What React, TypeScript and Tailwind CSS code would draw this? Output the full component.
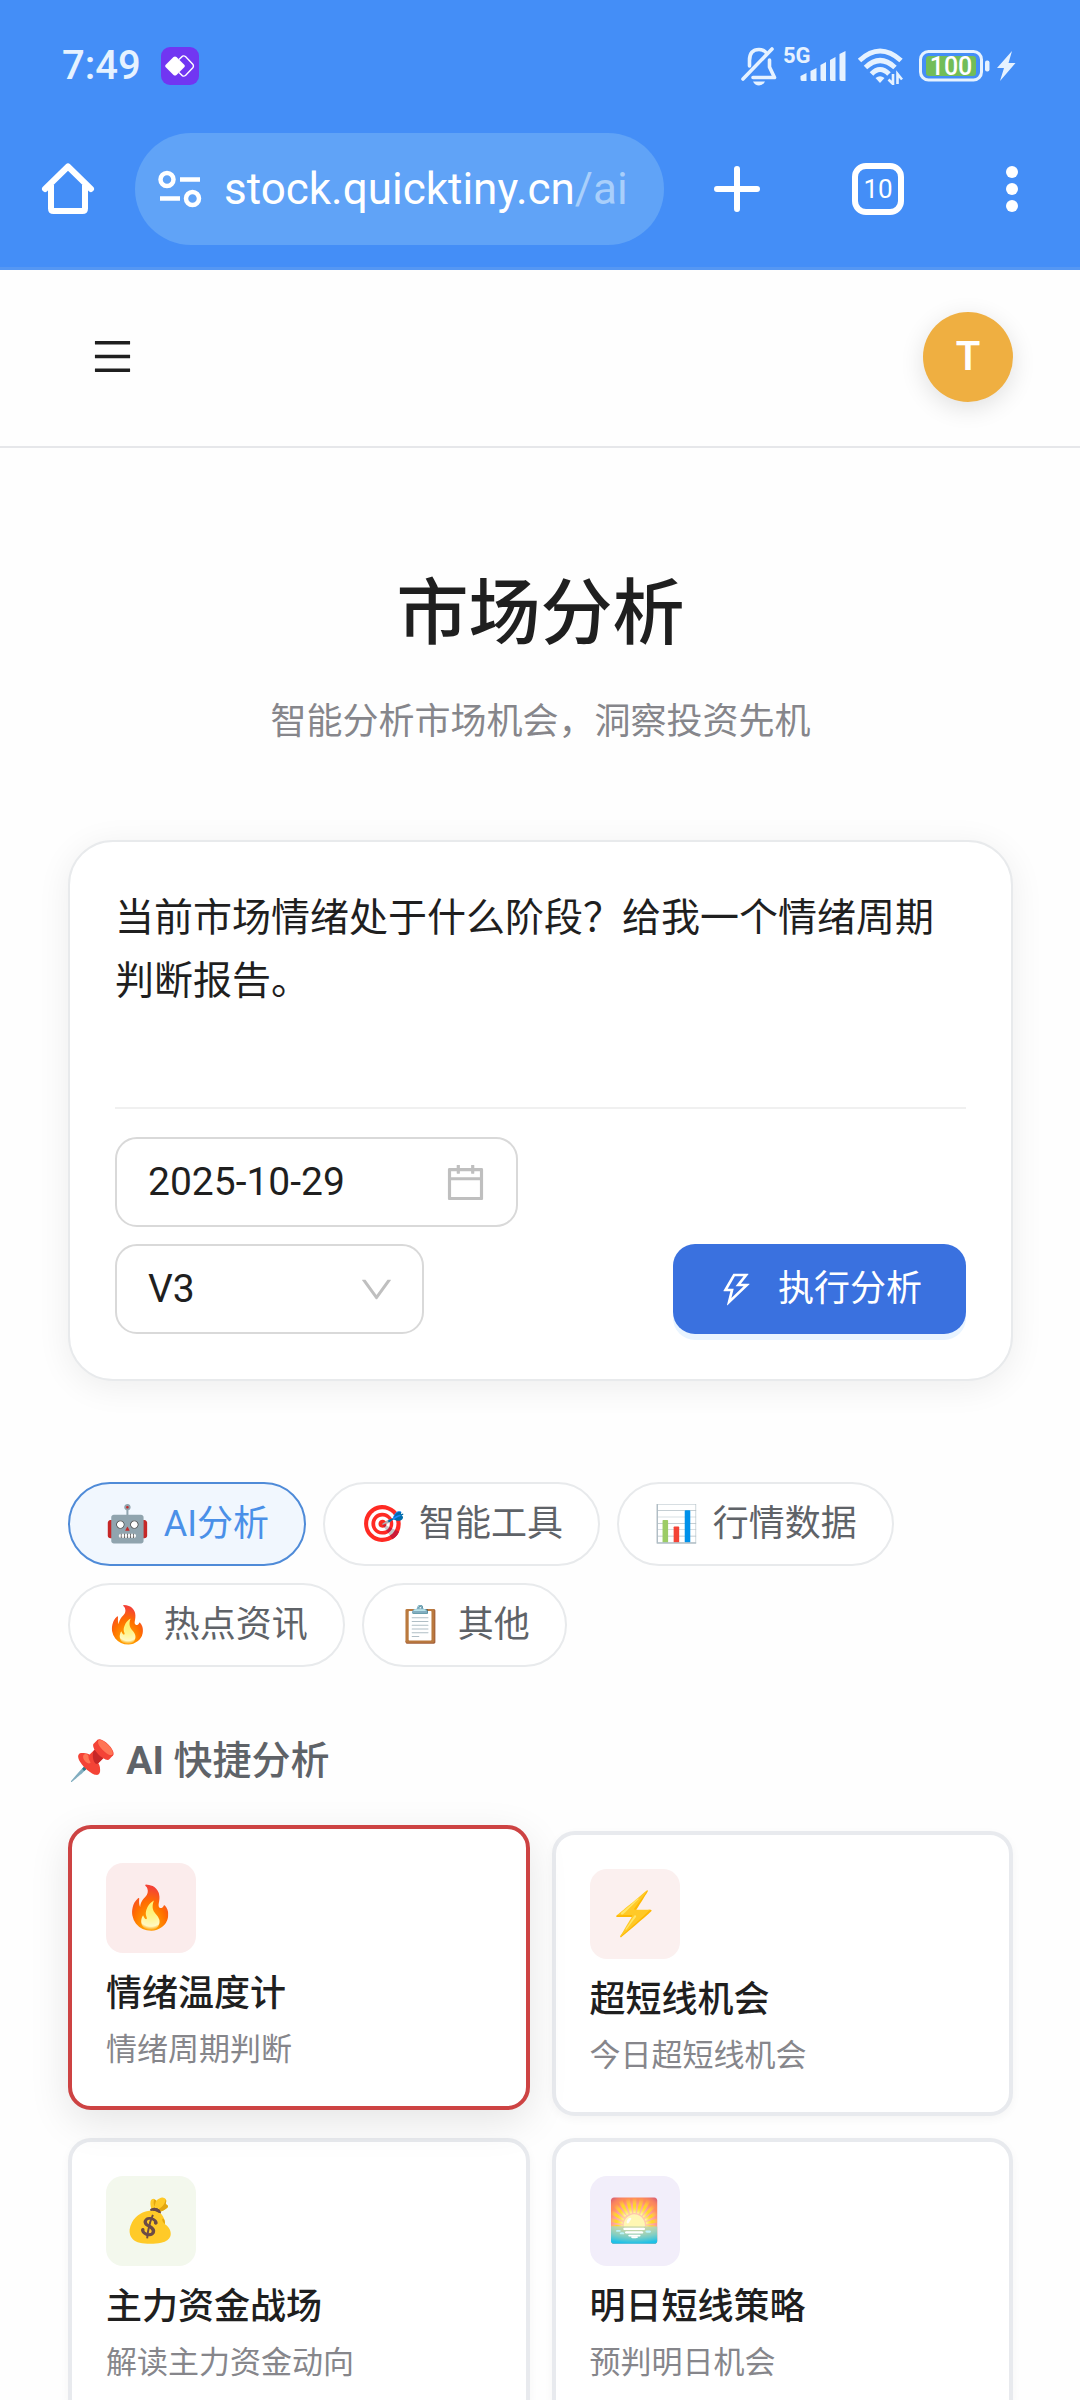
import React, { useState } from "react";
import {
  AiOutlineCalendar,
  AiOutlineDown,
  AiOutlineMenu,
  AiOutlineThunderbolt,
} from "react-icons/ai";

const tabs = [
  { key: "ai", icon: "🤖", label: "AI分析" },
  { key: "tools", icon: "🎯", label: "智能工具" },
  { key: "market", icon: "📊", label: "行情数据" },
  { key: "news", icon: "🔥", label: "热点资讯" },
  { key: "other", icon: "📋", label: "其他" },
];

const actions = [
  { icon: "🔥", title: "情绪温度计", desc: "情绪周期判断", tint: "bg-[#fbecec]" },
  { icon: "⚡", title: "超短线机会", desc: "今日超短线机会", tint: "bg-[#fbf0ef]" },
  { icon: "💰", title: "主力资金战场", desc: "解读主力资金动向", tint: "bg-[#f3f8ed]" },
  { icon: "🌅", title: "明日短线策略", desc: "预判明日机会", tint: "bg-[#f2eefa]" },
];

const StatusBar: React.FC = () => (
  <div className="flex items-center justify-between pt-[44px] pl-[62px] pr-[64px] h-[88px] text-[#e6f2ff]">
    <div className="flex items-center gap-[20px]">
      <span className="text-[40px] leading-[42px] font-medium">7:49</span>
      <svg width="38" height="38" viewBox="0 0 38 38">
        <rect width="38" height="38" rx="9" fill="#7136f2" />
        <path
          d="M18 12.5 21.5 9.2Q23 8.500 24.500 9.500L32 17.500Q33 19 32 20.500L24.500 28.500Q23 29.500 21.500 28.800L18 25.500"
          fill="none"
          stroke="#fff"
          strokeWidth="1.400"
        />
        <path
          d="M4.500 18 12.500 10Q14 9 15.500 10L23.500 18Q24.300 19 23.500 20L15.500 28Q14 29 12.500 28L4.500 20Q3.700 19 4.500 18Z"
          fill="#fff"
        />
      </svg>
    </div>

    <div className="flex items-center">
      {/* 静音 */}
      <svg width="36" height="40" viewBox="0 0 36 40" fill="none" stroke="currentColor">
        <path
          d="M8.500 20V14.500Q8.500 3.500 18 3.500Q22 3.500 24.500 6M28.500 14V21L33.500 31.500H12"
          strokeWidth="3.600"
          strokeLinejoin="round"
          strokeLinecap="round"
        />
        <path d="M2 33 31 3" strokeWidth="3.600" strokeLinecap="round" />
        <path d="M12 35.500H24Q22 39.500 18 39.500Q14 39.500 12 35.500Z" fill="currentColor" stroke="none" />
      </svg>
      {/* 信号 */}
      <svg className="ml-[7px]" width="64" height="54" viewBox="0 -8 64 54" fill="currentColor">
        <text x="-1" y="16" fontSize="22" fontWeight="700" fontFamily="Roboto, sans-serif">
          5G
        </text>
        <path d="M16.500 29 22.500 26V34H18Q16.500 34 16.500 32Z" />
        <path d="M26.500 24 32.500 21V34H28Q26.500 34 26.500 32Z" />
        <path d="M36.500 18 42 15V34H38Q36.500 34 36.500 32Z" />
        <path d="M46 13 51.500 10V34H47.500Q46 34 46 32Z" />
        <path d="M55.500 7 61.500 4V34H57.500Q55.500 34 55.500 32Z" />
      </svg>
      {/* WiFi */}
      <svg className="ml-[9px]" width="48" height="38" viewBox="0 0 48 38" fill="none" stroke="currentColor">
        <path d="M2.500 13.500Q23 -5.500 44 13.500" strokeWidth="5" />
        <path d="M8.500 20.500Q23 6.500 38 20.500" strokeWidth="5" />
        <path d="M14.500 27Q23 18 32 27" strokeWidth="5" />
        <path d="M18.500 31Q23 27.500 27.500 31L23 36Z" fill="currentColor" stroke="none" />
        <path d="M36 27V37L31.500 32.500M40.500 37V27L45 32.500" strokeWidth="2.600" />
      </svg>
      {/* 电量 */}
      <svg className="ml-[14px]" width="72" height="32" viewBox="0 0 72 32">
        <rect x="1.500" y="1.500" width="61" height="28.500" rx="8" fill="none" stroke="currentColor" strokeWidth="3" />
        <rect x="7" y="6" width="50" height="20" rx="3" fill="#72bd58" />
        <rect x="66" y="10.500" width="4.500" height="11" rx="2" fill="currentColor" />
        <text
          x="32"
          y="25"
          textAnchor="middle"
          fontSize="25"
          fontWeight="500"
          fill="#fff"
          fontFamily="Roboto, sans-serif"
        >
          100
        </text>
      </svg>
      <svg className="ml-[5px]" width="20" height="30" viewBox="0 0 20 30" fill="currentColor">
        <path d="M16 0 1 17H8L4 30 19.500 12H12.500Z" />
      </svg>
    </div>
  </div>
);

const BrowserBar: React.FC = () => (
  <div className="flex items-center mt-[45px] pl-[41px] pr-[60px] pb-[22px] text-white">
    <button aria-label="主页">
      <svg width="54" height="54" viewBox="0 0 54 54" fill="none" stroke="currentColor" strokeWidth="6">
        <path d="M4 27 27 4.500 50 27" strokeLinecap="round" strokeLinejoin="round" />
        <path d="M10 23V46.500Q10 49 12.500 49H41.500Q44 49 44 46.500V23" />
      </svg>
    </button>
    <button className="ml-[40px] flex-1 min-w-0 h-28 rounded-full bg-[#60a3f7] flex items-center pl-[23px] gap-[22px] text-left">
      <svg className="shrink-0" width="44" height="38" viewBox="0 0 44 38" fill="none" stroke="currentColor" strokeWidth="4.500">
        <circle cx="9" cy="9.500" r="6.500" />
        <path d="M22 9.500H42M2 28.500H22" />
        <circle cx="34.500" cy="28.500" r="6.500" />
      </svg>
      <span className="text-[44px] leading-[60px] whitespace-nowrap">
        stock.quicktiny.cn<span className="text-[#a9cffb]">/ai</span>
      </span>
    </button>
    <button className="ml-[50px]" aria-label="新标签页">
      <svg width="46" height="46" viewBox="0 0 46 46" stroke="currentColor" strokeWidth="6" strokeLinecap="round">
        <path d="M23 3V43M3 23H43" />
      </svg>
    </button>
    <button
      className="ml-[92px] w-[52px] h-[52px] rounded-[14px] border-[6px] border-white text-[26px] leading-none flex items-center justify-center"
      aria-label="标签页"
    >
      10
    </button>
    <button className="ml-[100px]" aria-label="更多">
      <svg width="16" height="48" viewBox="0 0 16 48" fill="currentColor">
        <circle cx="8" cy="7" r="6" />
        <circle cx="8" cy="24" r="6" />
        <circle cx="8" cy="41" r="6" />
      </svg>
    </button>
  </div>
);

export default function App() {
  const [prompt, setPrompt] = useState(
    "当前市场情绪处于什么阶段？给我一个情绪周期判断报告。",
  );
  const [activeTab, setActiveTab] = useState("ai");
  const [selected, setSelected] = useState(0);

  return (
    <div className="h-screen flex flex-col overflow-hidden bg-[#fefefe] text-[#1f1f1f] font-[Roboto,'Noto_Sans_CJK_SC','Noto_Color_Emoji',sans-serif]">
      <div className="shrink-0 bg-[#448ef7] border-b-[3px] border-[#5597f3]">
        <StatusBar />
        <BrowserBar />
      </div>

      <header className="shrink-0 h-[178px] pl-[67px] pr-[67px] pb-[3px] flex items-center justify-between bg-[#fefefe] border-b-2 border-[#e6e7ea]">
        <button className="w-[90px] h-[90px] flex items-center justify-center" aria-label="菜单">
          <AiOutlineMenu size={45} />
        </button>
        <button className="w-[90px] h-[90px] rounded-full bg-[#efaf41] text-white text-[40px] font-semibold shadow-[0_6px_24px_rgba(0,0,0,0.12)]">
          T
        </button>
      </header>

      <main className="flex-1 min-h-0 overflow-y-auto [scrollbar-width:none] pl-[68px] pr-[67px] pt-[116px] pb-12">
        <h1 className="text-center text-[72px] leading-[100px] font-medium">市场分析</h1>
        <p className="mt-[30px] text-center text-[36px] leading-[56px] text-[#86868b]">
          智能分析市场机会，洞察投资先机
        </p>

        {/* 输入区 */}
        <section className="mt-[90px] px-[45px] pt-[45px] pb-[45px] bg-white rounded-[45px] border-2 border-[#e8eaec] shadow-[0_6px_34px_rgba(0,0,0,0.07)]">
          <textarea
            aria-label="分析问题"
            className="block w-full h-[220px] resize-none bg-transparent text-[39px] leading-[63px] outline-none"
            value={prompt}
            onChange={(e) => setPrompt(e.target.value)}
          />
          <div className="border-t-2 border-[#f0f0f0] pt-7 flex flex-col gap-[17px]">
            <label className="w-[403px] h-[90px] pl-[31px] pr-7 flex items-center justify-between rounded-[22px] border-2 border-[#d9d9d9]">
              <input
                aria-label="日期"
                className="w-[260px] text-[39px] bg-transparent outline-none"
                defaultValue="2025-10-29"
              />
              <AiOutlineCalendar size={45} className="text-[#bfbfbf]" />
            </label>
            <div className="flex items-center justify-between">
              <div className="relative w-[309px]">
                <select
                  aria-label="模型"
                  className="w-full h-[90px] pl-[31px] pr-7 appearance-none rounded-[22px] border-2 border-[#d9d9d9] bg-transparent text-[39px] outline-none"
                >
                  <option>V3</option>
                  <option>R1</option>
                </select>
                <AiOutlineDown
                  size={39}
                  className="absolute right-7 inset-y-0 my-auto text-[#bfbfbf] pointer-events-none"
                />
              </div>
              <button className="h-[90px] px-11 flex items-center gap-[22px] rounded-[22px] bg-[#3a71df] text-white text-[36px] shadow-[0_6px_0_#e9f4ff]">
                <AiOutlineThunderbolt size={39} />
                执行分析
              </button>
            </div>
          </div>
        </section>

        {/* 分类 */}
        <div className="mt-[101px] flex flex-wrap gap-[17px]">
          {tabs.map((tab) => (
            <button
              key={tab.key}
              onClick={() => setActiveTab(tab.key)}
              className={`h-[84px] px-[35px] flex items-center gap-[14px] rounded-full border-2 text-[36px] ${
                activeTab === tab.key
                  ? "bg-[#f1f7fe] border-[#4f8bd8] text-[#4a90e8]"
                  : "bg-white border-[#e8eaec] text-[#5f6368]"
              }`}
            >
              <span>{tab.icon}</span>
              <span>{tab.label}</span>
            </button>
          ))}
        </div>

        <h2 className="mt-[64px] text-[39px] leading-[60px] font-medium text-[#5f6368]">
          📌 <span className="font-bold">AI</span> 快捷分析
        </h2>

        {/* 快捷卡片 */}
        <div className="mt-[40px] grid grid-cols-2 gap-[22px]">
          {actions.map((item, i) => (
            <button
              key={item.title}
              onClick={() => setSelected(i)}
              className={`p-[34px] flex flex-col items-start bg-white rounded-[23px] border-4 ${
                selected === i
                  ? "border-[#cd4343] -translate-y-1.5 shadow-[0_12px_40px_rgba(0,0,0,0.1)]"
                  : "border-[#e8eaee] shadow-[0_3px_10px_rgba(0,0,0,0.04)]"
              }`}
            >
              <span
                className={`w-[90px] h-[90px] flex items-center justify-center rounded-[17px] text-[42px] leading-none ${item.tint}`}
              >
                {item.icon}
              </span>
              <span className="mt-[19px] text-[36px] leading-[44px] font-medium">{item.title}</span>
              <span className="mt-3 text-[31px] leading-[44px] text-[#86868b]">{item.desc}</span>
            </button>
          ))}
        </div>
      </main>
    </div>
  );
}
